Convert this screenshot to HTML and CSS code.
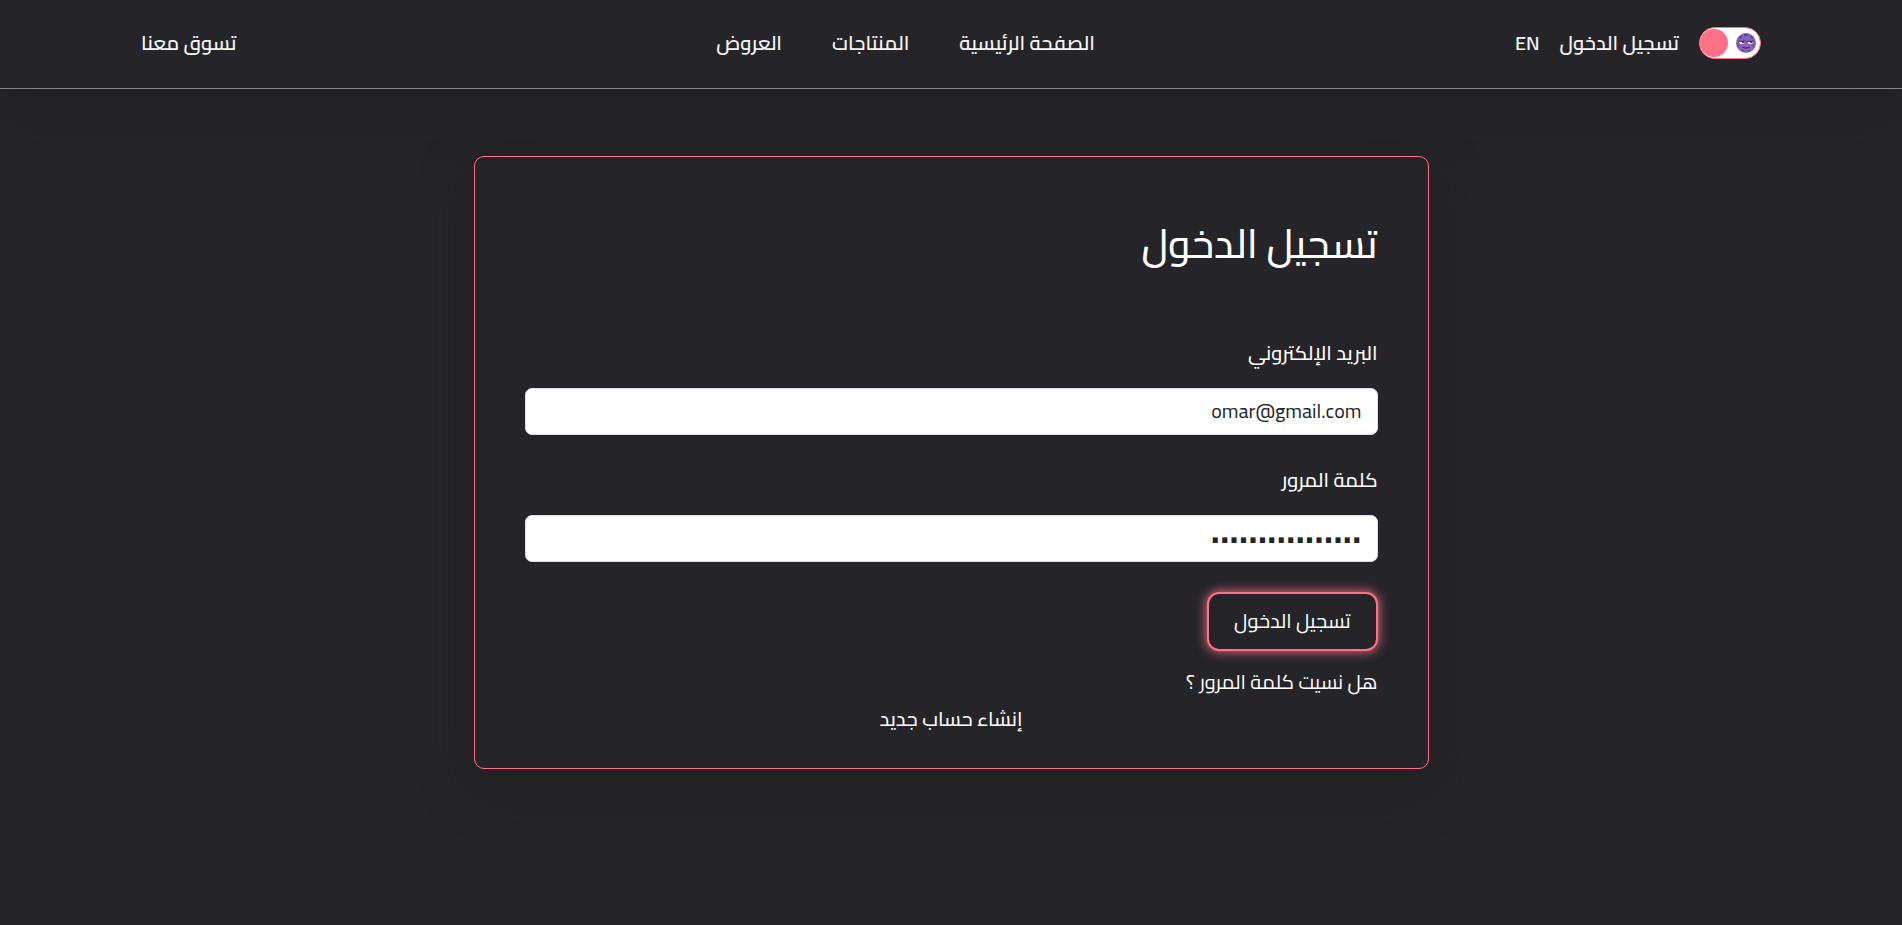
FILE: index.html
```html
<!DOCTYPE html>
<html lang="ar" dir="rtl">
<head>
<meta charset="utf-8">
<meta name="viewport" content="width=device-width, initial-scale=1">
<title>تسجيل الدخول</title>
<link rel="stylesheet" href="styles.css">
</head>
<body>
<header class="site-header">
  <nav class="nav">
    <div class="nav-account">
      <label class="theme-switch">
        <input class="theme-input" type="checkbox" role="switch" aria-label="EN" checked>
        <svg class="theme-face" viewBox="0 0 20 20" aria-hidden="true">
          <circle cx="10" cy="10" r="10" fill="#8562bd"/>
          <path d="M8 1h4l-.6 2.500H8.600zM3 4l2-1.800.8 2.200-2 1.400zM17 4l-2-1.800-.8 2.200 2 1.400zM1 11l2 1.500v2.500zM19 11l-2 1.500v2.500zM5 17l2.500-.3.500 2.300zM15 17l-2.500-.3-.5 2.300z" fill="#5f4292"/>
          <path d="M3 8.500h5.500c0 3.500-5 3.500-5.500 0zM11.500 8.500H17c-.5 3.500-5.500 3.500-5.500 0z" fill="#fff"/>
          <path d="M3 8.300h5.800M11.200 8.300H17M6.500 14c2 1.500 5 1.500 7 0" fill="none" stroke="#392558" stroke-width="1" stroke-linecap="round"/>
          <circle cx="7" cy="9.300" r="1" fill="#392558"/>
          <circle cx="15" cy="9.300" r="1" fill="#392558"/>
        </svg>
        <span class="theme-knob"></span>
      </label>
      <a class="nav-link" href="#">تسجيل الدخول</a>
      <a class="nav-link" href="#" lang="en">EN</a>
    </div>
    <div class="nav-pages">
      <a class="nav-link" href="#">الصفحة الرئيسية</a>
      <a class="nav-link" href="#">المنتاجات</a>
      <a class="nav-link" href="#">العروض</a>
    </div>
    <a class="nav-link" href="#">تسوق معنا</a>
  </nav>
</header>
<main class="page">
  <form class="card">
    <h1 class="card-title">تسجيل الدخول</h1>
    <div class="field">
      <label class="field-label" for="email">البريد الإلكتروني</label>
      <input class="field-input" id="email" type="email" value="omar@gmail.com">
    </div>
    <div class="field">
      <label class="field-label" for="password">كلمة المرور</label>
      <input class="field-input" id="password" type="password" value="1234567890123456">
    </div>
    <button class="submit" type="submit">تسجيل الدخول</button>
    <a class="text-link" href="#">هل نسيت كلمة المرور ؟</a>
    <a class="text-link text-link-center" href="#">إنشاء حساب جديد</a>
  </form>
</main>
</body>
</html>
```
FILE: styles.css
```css
*, *::before, *::after { box-sizing: border-box; }

body {
  margin: 0;
  min-height: 100vh;
  background: #252429;
  color: #fff;
  font-family: Cairo, "Open Sans", "DejaVu Sans", sans-serif;
  font-size: 20px;
  line-height: 30px;
}

a { color: inherit; text-decoration: none; }

.site-header {
  border-bottom: 1px solid #858585;
  box-shadow: 0 16px 48px rgba(30, 31, 30, .6);
}

.nav {
  display: flex;
  justify-content: space-between;
  align-items: center;
  max-width: 1668px;
  min-height: 88px;
  margin: 0 auto;
  padding: 0 24px 2px;
}

.nav-account { display: flex; align-items: center; gap: 20px; }
.nav-pages { display: flex; gap: 50px; margin-inline-end: 60px; }
.nav-link { color: #f5f5f5; font-weight: 600; white-space: nowrap; }

.theme-switch {
  display: flex;
  align-items: center;
  justify-content: space-between;
  width: 62px;
  height: 32px;
  padding-inline-start: 4px;
  border: 1px solid #ff7187;
  border-radius: 16px;
  background: #fff;
  cursor: pointer;
}
.theme-input {
  position: absolute;
  opacity: 0;
}
.theme-face { width: 20px; height: 20px; }
.theme-knob {
  width: 28px;
  height: 28px;
  border-radius: 50%;
  background: #ff7187;
}

.page { padding: 67px 24px; }

.card {
  display: flex;
  flex-direction: column;
  align-items: flex-start;
  max-width: 955px;
  margin: 0 auto;
  padding: 57px 50px 34px;
  border: 1px solid #ff7187;
  border-radius: 10px;
  background: #252429;
  box-shadow: 0 16px 48px rgba(30, 31, 30, .6);
}

.card-title {
  margin: 0 0 64px;
  font-size: 40px;
  font-weight: 500;
  line-height: 60px;
}

.field { width: 100%; margin-bottom: 30px; }
.field-label { display: block; margin-bottom: 20px; font-weight: 500; }
.field-input {
  display: block;
  width: 100%;
  height: 47px;
  padding: 0 15px 2px;
  border: 1px solid #dee2e6;
  border-radius: 7px;
  background: #fff;
  color: #212529;
  font: inherit;
  text-align: right;
}

.submit {
  height: 59px;
  margin-bottom: 16px;
  padding: 0 25px 2px;
  border: 2px solid #ff7187;
  border-radius: 12px;
  background: #252429;
  box-shadow: 0 0 12px #ff7187;
  color: #fff;
  font: inherit;
  cursor: pointer;
}

.text-link + .text-link { margin-top: 7px; }
.text-link-center { align-self: center; font-weight: 500; }
```
